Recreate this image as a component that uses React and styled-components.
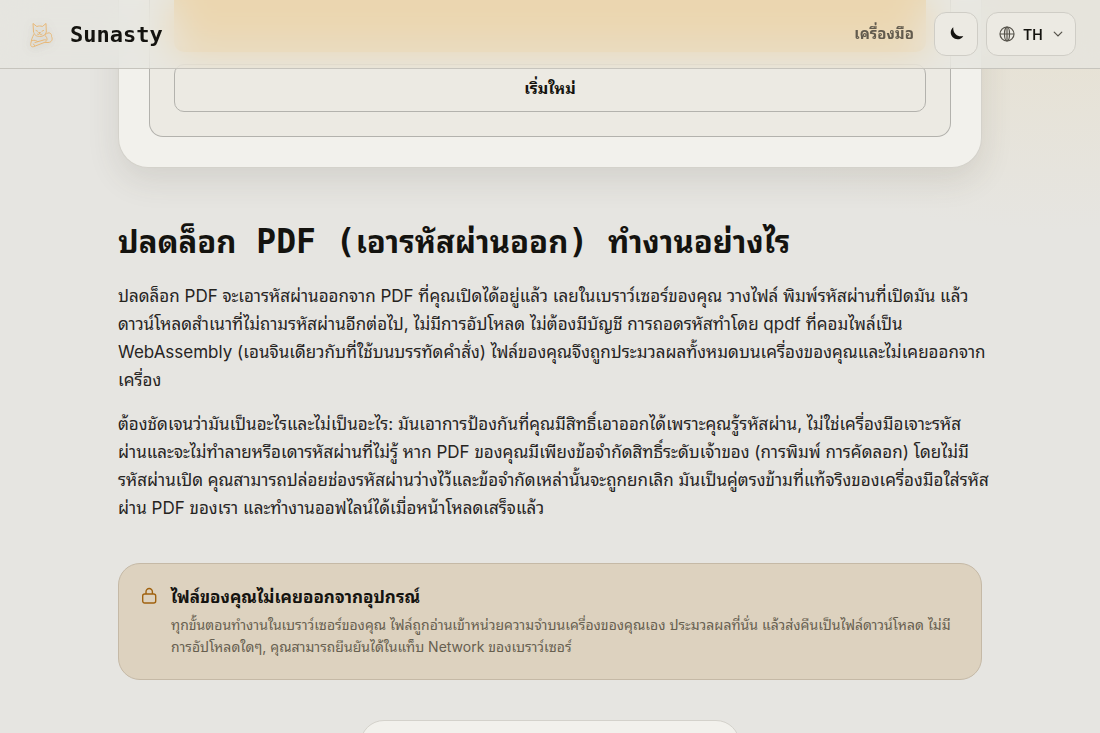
import React from 'react';
import styled, { createGlobalStyle } from 'styled-components';

const sans = '"Inter", "Noto Sans Thai Looped", "Noto Sans", sans-serif';
const mono = '"DejaVu Sans Mono", "Noto Sans Thai Looped", monospace';

const GlobalStyle = createGlobalStyle`
  * {
    box-sizing: border-box;
  }
  body {
    margin: 0;
    background: #e6e5e1;
    color: #14130f;
    font-family: ${sans};
  }
`;

const Page = styled.div`
  height: 100vh;
  overflow: hidden;
  background:
    radial-gradient(ellipse 420px 230px at 96% 0, rgba(232, 220, 190, 0.45), rgba(232, 220, 190, 0) 100%),
    #e6e5e1;
`;

const Header = styled.header`
  position: fixed;
  top: 0;
  left: 0;
  right: 0;
  z-index: 10;
  display: flex;
  align-items: center;
  justify-content: space-between;
  padding: 12px 24px;
  background: rgba(230, 229, 223, 0.7);
  border-bottom: 1px solid #c6c4bd;
  backdrop-filter: blur(20px);
`;

const Brand = styled.a`
  display: flex;
  align-items: center;
  gap: 14px;
  color: #14130f;
  font-family: ${mono};
  font-size: 22px;
  font-weight: 700;
  text-decoration: none;
`;

const CatLogo = styled.svg`
  width: 32px;
  height: 32px;
  filter: drop-shadow(0 2px 4px rgba(90, 80, 60, 0.25));
`;

const Nav = styled.nav`
  display: flex;
  align-items: center;
  gap: 8px;
`;

const NavLink = styled.a`
  margin-right: 12px;
  color: #625b4e;
  font-size: 15px;
  font-weight: 700;
  line-height: 24px;
  text-decoration: none;
`;

const IconButton = styled.button`
  display: flex;
  align-items: center;
  justify-content: center;
  width: 44px;
  height: 44px;
  padding: 0;
  border: 1px solid #cfcdc6;
  border-radius: 12px;
  background: #eceae3;
  color: #14130f;
`;

const Language = styled.label`
  display: flex;
  align-items: center;
  height: 44px;
  gap: 8px;
  padding: 0 12px;
  border: 1px solid #cfcdc6;
  border-radius: 12px;
  background: #eceae3;
  color: #55524a;
`;

const LanguageSelect = styled.select`
  width: 22px;
  padding: 0;
  border: 0;
  appearance: none;
  background: transparent;
  color: #14130f;
  font-family: ${sans};
  font-size: 14px;
  font-weight: 600;
`;

const Main = styled.main`
  max-width: 912px;
  margin: 0 auto;
  padding: 0 24px;
`;

const ToolCard = styled.section`
  padding: 0 30px 30px;
  border: 1px solid #d4d2cb;
  border-top: 0;
  border-radius: 0 0 30px 30px;
  background: #f2f1ec;
  box-shadow: 0 12px 32px rgba(70, 66, 50, 0.12);
`;

const ToolPanel = styled.div`
  display: flex;
  flex-direction: column;
  gap: 12px;
  padding: 0 24px 24px;
  border: 1px solid #b3b2ad;
  border-top: 0;
  border-radius: 0 0 14px 14px;
  background: #eceae3;
`;

const PrimaryArea = styled.div`
  height: 52px;
  border-radius: 0 0 10px 10px;
  background: #f9b240;
`;

const OutlineButton = styled.button`
  height: 48px;
  padding: 0 16px;
  border: 1px solid #b3b2ad;
  border-radius: 10px;
  background: transparent;
  color: #14130f;
  font-family: ${sans};
  font-size: 16px;
  font-weight: 700;
  line-height: 24px;
`;

const Title = styled.h2`
  margin: 52px 0 0;
  font-family: ${mono};
  font-size: 31px;
  font-weight: 700;
  line-height: 44px;
`;

const Latin = styled.span`
  font-size: 33px;
`;

const Prose = styled.div`
  display: flex;
  flex-direction: column;
  gap: 16px;
  margin: 18px -12px 0 0;
`;

const Paragraph = styled.p`
  margin: 0;
  color: #26241f;
  font-size: 17px;
  line-height: 28px;
`;

const Notice = styled.aside`
  display: flex;
  gap: 12px;
  margin-top: 41px;
  padding: 21px 22px;
  border: 1px solid #c5b9a6;
  border-radius: 22px;
  background: #ddd2bf;
`;

const LockIcon = styled.svg`
  flex: none;
  width: 18px;
  height: 18px;
  margin-top: 2px;
`;

const NoticeTitle = styled.h3`
  margin: 0;
  font-size: 17px;
  font-weight: 700;
  line-height: 24px;
`;

const NoticeText = styled.p`
  margin: 5px 0 0;
  color: #675f50;
  font-size: 14px;
  line-height: 22px;
`;

const NextCard = styled.section`
  width: 380px;
  height: 120px;
  margin: 40px auto 0;
  border: 1px solid #d4d2cb;
  border-radius: 24px;
  background: #f2f1ec;
`;

const Cat = () => (
  <CatLogo viewBox="0 0 32 32" fill="none" stroke="#e8b877" strokeWidth="1" strokeLinecap="round" strokeLinejoin="round" aria-hidden="true">
    <path d="M9.500 13.500 9 5.500l3.800 3c1.900-.7 3.800-.7 5.600 0l3.600-3 .3 8.500c-.8 3-3.300 4.500-6.600 4.500s-5.600-1.500-6.200-5Z" />
    <path d="M12 12.500l1.500.7M19.500 12.500l-1.500.7M15 14.500h1.500l-.8 1ZM13.500 16.200c1 .8 1.800.3 2.200-.5.500.8 1.300 1.300 2.300.5" />
    <path d="M9.800 16.500C8 19.500 7.500 22 6.800 25.500c-.6 2.500 1 4 3.200 3l11.500-4.500c1.500-.8.500-2.800-1.200-2.200L11 24.500M8.500 22.500c2-.8 4 .2 5 1" />
    <path d="M21.500 16.500c3.500-3.500 6.500-1 6 2 1.700 3 0 6-3.500 6h-2.500M21 17.500c1.500 1 2.300 2.700 2 4.500M10.500 27.500 9.500 26" />
  </CatLogo>
);

export default function App() {
  return (
    <Page>
      <GlobalStyle />
      <Header>
        <Brand href="#">
          <Cat />
          Sunasty
        </Brand>
        <Nav>
          <NavLink href="#tools">เครื่องมือ</NavLink>
          <IconButton type="button" aria-label="โหมดมืด">
            <svg width="18" height="18" viewBox="0 0 18 18" aria-hidden="true">
              <path d="M6.300 2.300c-3.200 2.400-3.400 7.200-.6 10 3.200 3.200 8.600 2.300 10.600-1.400-2.600.9-5.500.5-7.600-1.600-2-2-2.700-4.600-2.400-7Z" fill="currentColor" />
            </svg>
          </IconButton>
          <Language>
            <svg width="16" height="16" viewBox="0 0 16 16" fill="none" stroke="currentColor" strokeWidth="1.200" aria-hidden="true">
              <circle cx="8" cy="8" r="7" />
              <path d="M1 8h14M8 1v14" />
              <ellipse cx="8" cy="8" rx="2.500" ry="7" />
            </svg>
            <LanguageSelect aria-label="ภาษา" defaultValue="th">
              <option value="th">TH</option>
              <option value="en">EN</option>
            </LanguageSelect>
            <svg width="10" height="10" viewBox="0 0 10 10" fill="none" stroke="currentColor" strokeWidth="1.200" strokeLinecap="round" aria-hidden="true">
              <path d="M1.200 3.200 5 7l3.800-3.800" />
            </svg>
          </Language>
        </Nav>
      </Header>
      <Main>
        <ToolCard>
          <ToolPanel>
            <PrimaryArea />
            <OutlineButton type="button">เริ่มใหม่</OutlineButton>
          </ToolPanel>
        </ToolCard>
        <Title>
          ปลดล็อก<Latin> PDF (</Latin>เอารหัสผ่านออก<Latin>) </Latin>ทำงานอย่างไร
        </Title>
        <Prose>
          <Paragraph>
            ปลดล็อก PDF จะเอารหัสผ่านออกจาก PDF ที่คุณเปิดได้อยู่แล้ว เลยในเบราว์เซอร์ของคุณ วางไฟล์ พิมพ์รหัสผ่านที่เปิดมัน แล้วดาวน์โหลดสำเนาที่ไม่ถามรหัสผ่านอีกต่อไป, ไม่มีการอัปโหลด ไม่ต้องมีบัญชี การถอดรหัสทำโดย qpdf ที่คอมไพล์เป็น WebAssembly (เอนจินเดียวกับที่ใช้บนบรรทัดคำสั่ง) ไฟล์ของคุณจึงถูกประมวลผลทั้งหมดบนเครื่องของคุณและไม่เคยออกจากเครื่อง
          </Paragraph>
          <Paragraph>
            ต้องชัดเจนว่ามันเป็นอะไรและไม่เป็นอะไร: มันเอาการป้องกันที่คุณมีสิทธิ์เอาออกได้เพราะคุณรู้รหัสผ่าน, ไม่ใช่เครื่องมือเจาะรหัส<br />ผ่านและจะไม่ทำลายหรือเดารหัสผ่านที่ไม่รู้ หาก PDF ของคุณมีเพียงข้อจำกัดสิทธิ์ระดับเจ้าของ (การพิมพ์ การคัดลอก) โดยไม่มีรหัสผ่านเปิด คุณสามารถปล่อยช่องรหัสผ่านว่างไว้และข้อจำกัดเหล่านั้นจะถูกยกเลิก มันเป็นคู่ตรงข้ามที่แท้จริงของเครื่องมือใส่รหัสผ่าน PDF ของเรา และทำงานออฟไลน์ได้เมื่อหน้าโหลดเสร็จแล้ว
          </Paragraph>
        </Prose>
        <Notice>
          <LockIcon viewBox="0 0 18 18" fill="none" stroke="#a0620f" strokeWidth="1.400" aria-hidden="true">
            <rect x="1.700" y="7" width="13" height="9" rx="2" />
            <path d="M5 7V4.700a3.200 3.200 0 0 1 6.400 0V7" />
          </LockIcon>
          <div>
            <NoticeTitle>ไฟล์ของคุณไม่เคยออกจากอุปกรณ์</NoticeTitle>
            <NoticeText>
              ทุกขั้นตอนทำงานในเบราว์เซอร์ของคุณ ไฟล์ถูกอ่านเข้าหน่วยความจำบนเครื่องของคุณเอง ประมวลผลที่นั่น แล้วส่งคืนเป็นไฟล์ดาวน์โหลด ไม่มีการอัปโหลดใดๆ, คุณสามารถยืนยันได้ในแท็บ Network ของเบราว์เซอร์
            </NoticeText>
          </div>
        </Notice>
        <NextCard />
      </Main>
    </Page>
  );
}
